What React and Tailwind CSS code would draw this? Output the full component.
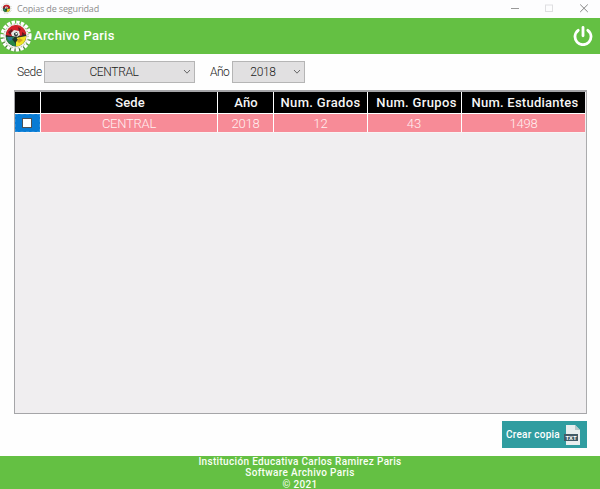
import React from "react";

function Gear({ className }) {
  return (
    <svg viewBox="0 0 32 32" className={className}>
      <circle cx="16" cy="16" r="14.2" fill="none" stroke="#4d6646" strokeWidth="2.6" strokeDasharray="1.5 3" />
      <circle cx="16" cy="16" r="13.4" fill="none" stroke="#fff" strokeWidth="4.4" strokeDasharray="3.2 1.3" />
      <circle cx="16" cy="16" r="12.6" fill="#f1f1ec" />
      <circle cx="16" cy="16" r="12.1" fill="none" stroke="#8b928b" strokeWidth="1" strokeDasharray="1 2.2" />
      <circle cx="16" cy="16" r="10.4" fill="#26352a" />
      <path d="M5.8 15A10.3 10.3 0 0 1 26.3 14L20 16L16 13L11 16Z" fill="#d3202a" />
      <path d="M16 18L26.3 16A10.3 10.3 0 0 1 16 26.3Z" fill="#f0e528" />
      <path d="M5.8 17L14 17L16 26.3A10.3 10.3 0 0 1 5.8 17Z" fill="#258545" />
      <path d="M8 12L12 9L13 12L10 15ZM18 7L21 9L19 12ZM22 12L25 14L22 16Z" fill="#651820" />
      <path d="M7 17H12L13 20L9 21Z" fill="#2b7895" />
      <path d="M12 19L16 17L18 20L15 23Z" fill="#203728" />
      <path d="M19 18L23 20L19 23L17 21Z" fill="#d5a31f" />
      <path d="M11 13L14 10L19 11L20 15L17 17L12 16Z" fill="#e4e8e4" />
      <path d="M14 13L17 12L18 15L16 17L14 15Z" fill="#384342" />
      <path d="M15.5 13H17V14.5H15.5Z" fill="#fff" />
    </svg>
  );
}

function Combo({ children, className }) {
  return (
    <div className={`flex h-[22px] items-center border border-[#b5b5b5] bg-[#e1e0e1] text-[#222] ${className}`}>
      <span className="flex-1 text-center">{children}</span>
      <svg viewBox="0 0 8 6" className="mr-[3px] h-[6px] w-[8px]">
        <path d="M1 1L4 4.2L7 1" fill="none" stroke="#666" strokeWidth="1" />
      </svg>
    </div>
  );
}

const columns = [
  { title: "Sede", value: "CENTRAL", track: "pl-[2px] tracking-[0.1px]", valueTrack: "tracking-[-0.25px]" },
  { title: "Año", value: "2018", track: "pl-px tracking-[0.1px]", valueTrack: "tracking-[-0.2px]" },
  { title: "Num. Grados", value: "12", track: "tracking-[0.33px]", valueTrack: "" },
  { title: "Num. Grupos", value: "43", track: "tracking-[0.33px] pl-[4px]", valueTrack: "pr-px" },
  { title: "Num. Estudiantes", value: "1498", track: "tracking-[0.24px] pl-[3px]", valueTrack: "tracking-[-0.2px]" },
];

export default function App() {
  return (
    <div className="flex h-[489px] w-[600px] flex-col overflow-hidden bg-[#fefefe] font-[Roboto,sans-serif]">
      <header className="flex h-[18px] shrink-0 items-center bg-[#fdfdfe]">
        <Gear className="ml-[1px] mb-[2px] h-[11px] w-[11px]" />
        <span className="mb-[1px] ml-[5px] whitespace-nowrap font-['Open_Sans',sans-serif] text-[9px] leading-[14px] tracking-[-0.16px] text-[#8c8c8c]">Copias de seguridad</span>
        <svg viewBox="0 0 80 18" className="ml-auto mr-[10px] h-[18px] w-[80px]" fill="none">
          <path d="M1 8.5H9" stroke="#999" />
          <rect x="35.5" y="5" width="7" height="6.5" stroke="#dfdfe1" />
          <path d="M70.2 4.5L77.8 12M77.8 4.5L70.2 12" stroke="#858585" />
        </svg>
      </header>
      <div className="flex h-[36px] shrink-0 items-center bg-[#64c043] text-white">
        <Gear className="h-[32px] w-[32px]" />
        <span className="ml-[2px] whitespace-nowrap text-[13px] font-medium tracking-[0.26px]">Archivo Paris</span>
        <svg viewBox="0 0 20 20" className="mb-px mr-[7px] ml-auto h-[20px] w-[20px]" fill="none" stroke="#fff" strokeLinecap="round">
          <path d="M10 1.5V9.8" strokeWidth="2.8" />
          <path d="M5.2 4.3A8 8 0 1 0 14.8 4.3" strokeWidth="2.8" />
        </svg>
      </div>
      <main className="flex min-h-0 flex-1 flex-col pl-[14px] pr-[13px]">
        <div className="mt-[7px] flex items-center text-[12px] font-light text-[#222]">
          <span className="ml-[3px] w-[27px] tracking-[-0.35px]">Sede</span>
          <Combo className="w-[151px] tracking-[-0.35px]">CENTRAL</Combo>
          <span className="ml-[15px] w-[22px] tracking-[-0.5px]">Año</span>
          <Combo className="w-[73px] tracking-[-0.3px]">2018</Combo>
        </div>
        <section className="mt-[7px] h-[324px] shrink-0 border border-t-2 border-[#a5a5a8] border-r-[#ababad] bg-[#f0eef0] pr-px">
          <div className="grid grid-cols-[25px_176px_55px_93px_93px_123px] grid-rows-[21px_18px] gap-px border-b border-[#f8f4f5] bg-white text-center">
            <div className="bg-black" />
            {columns.map((c) => (
              <div key={c.title} className={`whitespace-nowrap bg-black text-[13px] font-medium leading-[22px] text-[#f5f5f5] ${c.track}`}>{c.title}</div>
            ))}
            <div className="flex items-center justify-center border border-dashed border-[#268ddc] bg-[#087bd4] pr-px">
              <span className="h-[10px] w-[10px] border border-[#4b5156] bg-white" />
            </div>
            {columns.map((c) => (
              <div key={c.title} className={`bg-[#f78b97] text-[13px] font-light leading-[19px] text-[#fff0f1] ${c.valueTrack}`}>{c.value}</div>
            ))}
          </div>
        </section>
        <button className="mt-[7px] flex h-[27px] w-[85px] shrink-0 items-center self-end bg-[#309da0] pl-[4px] text-white">
          <span className="whitespace-nowrap text-[10px] font-medium tracking-[0.25px]">Crear copia</span>
          <svg viewBox="0 0 17 20" className="ml-[4px] h-[20px] w-[17px]">
            <path d="M2 0H11L16 5V20H2Z" fill="#e9eeee" />
            <path d="M11 0V5H16Z" fill="#b6c8c9" />
            <rect x="0" y="9" width="14" height="7" fill="#435b66" />
            <text x="7" y="14.8" textAnchor="middle" fill="#fff" fontSize="6" fontWeight="700" fontFamily="Roboto">TXT</text>
          </svg>
        </button>
      </main>
      <footer className="h-[33px] shrink-0 bg-[#64c043] text-center text-[10px] font-medium leading-[11.4px] tracking-[0.33px] text-[#fafff6]">
        <div>Institución Educativa Carlos Ramirez Paris</div>
        <div>Software Archivo Paris</div>
        <div>© 2021</div>
      </footer>
    </div>
  );
}
